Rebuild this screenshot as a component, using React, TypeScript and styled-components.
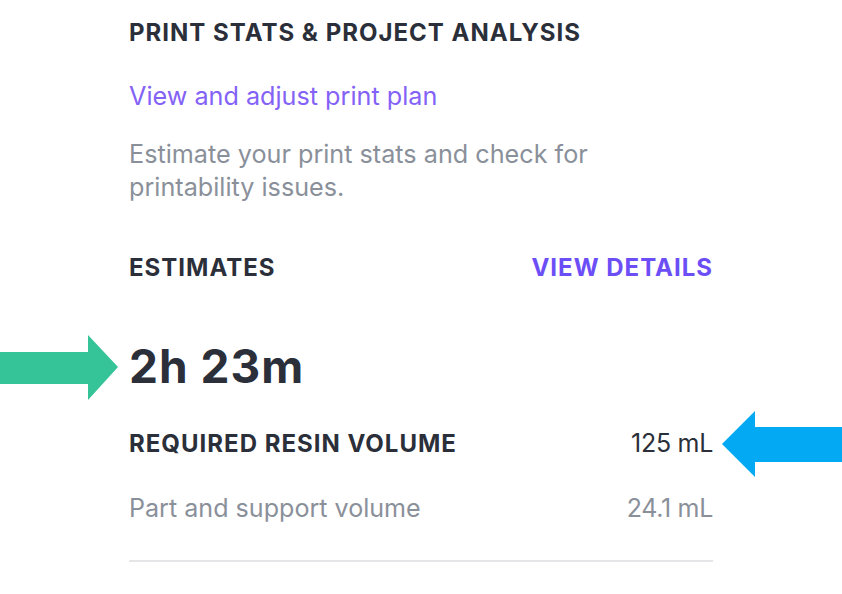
import React from "react";
import styled, { createGlobalStyle } from "styled-components";

const GlobalStyle = createGlobalStyle`
  html, body {
    margin: 0;
    padding: 0;
    background: #ffffff;
  }
  body {
    font-family: Inter, "Liberation Sans", Arial, sans-serif;
    color: #2b2f3a;
    overflow: hidden;
  }
`;

const Page = styled.div`
  position: relative;
  width: 842px;
  height: 594px;
  overflow: hidden;
`;

const Panel = styled.section`
  width: 584px;
  margin-left: 129px;
  padding-top: 19px;
  display: flex;
  flex-direction: column;
`;

const SectionTitle = styled.h2`
  margin: 0;
  font-size: 24px;
  line-height: 28px;
  font-weight: 700;
  letter-spacing: 1px;
  color: #2b2f3a;
`;

const PlanLink = styled.a`
  margin-top: 34px;
  font-size: 25.2px;
  line-height: 30px;
  color: #8462f6;
  text-decoration: none;
  cursor: pointer;
`;

const Description = styled.p`
  margin: 27px 0 0;
  font-size: 25.2px;
  line-height: 33px;
  color: #8a909a;
`;

const Row = styled.div<{ $gap?: number }>`
  display: flex;
  justify-content: space-between;
  align-items: baseline;
  margin-top: ${(p) => p.$gap ?? 0}px;
`;

const Label = styled.span`
  font-size: 24px;
  line-height: 28px;
  font-weight: 700;
  letter-spacing: 1px;
  color: #2b2f3a;
`;

const DetailsLink = styled(Label).attrs({ as: "a" })`
  color: #6c4ef6;
  cursor: pointer;
`;

const Duration = styled.div`
  margin-top: 57px;
  font-size: 46px;
  line-height: 54px;
  font-weight: 700;
  color: #2b2f3a;
  letter-spacing: 1px;
`;

const Value = styled.span<{ $muted?: boolean }>`
  font-size: 25px;
  line-height: 28px;
  color: ${(p) => (p.$muted ? "#8a909a" : "#2b2f3a")};
  letter-spacing: -0.3px;
`;

const SubLabel = styled.span`
  font-size: 25.1px;
  line-height: 28px;
  color: #8a909a;
`;

const Divider = styled.hr`
  margin: 38px 0 0;
  border: 0;
  height: 2px;
  background: #e6e6e8;
`;

// callout arrows laid over the panel
const Arrow = styled.svg<{ $left: number; $top: number }>`
  position: absolute;
  left: ${(p) => p.$left}px;
  top: ${(p) => p.$top}px;
`;

export default function App() {
  return (
    <Page>
      <GlobalStyle />
      <Panel>
        <SectionTitle>PRINT STATS &amp; PROJECT ANALYSIS</SectionTitle>
        <PlanLink>View and adjust print plan</PlanLink>
        <Description>
          Estimate your print stats and check for
          <br />
          printability issues.
        </Description>
        <Row $gap={50}>
          <Label>ESTIMATES</Label>
          <DetailsLink>VIEW DETAILS</DetailsLink>
        </Row>
        <Duration>2h 23m</Duration>
        <Row $gap={36}>
          <Label>REQUIRED RESIN VOLUME</Label>
          <Value>125 mL</Value>
        </Row>
        <Row $gap={36}>
          <SubLabel>Part and support volume</SubLabel>
          <Value $muted>24.1 mL</Value>
        </Row>
        <Divider />
      </Panel>

      <Arrow $left={0} $top={335} width={119} height={66} viewBox="0 0 119 66">
        <polygon points="0,17 88,17 88,0 118,32 88,65 88,49 0,49" fill="#35c497" />
      </Arrow>
      <Arrow $left={721} $top={410} width={121} height={68} viewBox="0 0 121 68">
        <polygon points="1,34 34,1 34,17 121,17 121,52 34,52 34,67" fill="#04a9f4" />
      </Arrow>
    </Page>
  );
}
